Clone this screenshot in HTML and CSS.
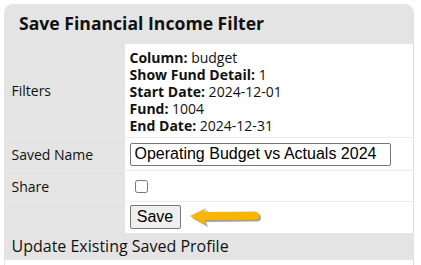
FILE: index.html
```html
<!DOCTYPE html>
<html lang="en">
<head>
    <meta charset="UTF-8">
    <title>Save Financial Income Filter</title>
    <link rel="stylesheet" href="styles.css">
</head>
<body>
    <div class="panel">
        <h2 class="panel-title">Save Financial Income Filter</h2>
        <table class="form-table">
            <tr class="row-filters">
                <td class="label">Filters</td>
                <td class="value filters">
                    <div><b>Column:</b> budget</div>
                    <div><b>Show Fund Detail:</b> 1</div>
                    <div><b>Start Date:</b> 2024-12-01</div>
                    <div><b>Fund:</b> 1004</div>
                    <div><b>End Date:</b> 2024-12-31</div>
                </td>
            </tr>
            <tr class="row-name">
                <td class="label">Saved Name</td>
                <td class="value"><input type="text" class="name-input" value="Operating Budget vs Actuals 2024"></td>
            </tr>
            <tr class="row-share">
                <td class="label">Share</td>
                <td class="value"><input type="checkbox" class="share-box"></td>
            </tr>
            <tr class="row-save">
                <td class="label"></td>
                <td class="value">
                    <div class="save-wrap">
                        <button class="save-btn">Save</button>
                        <svg class="arrow" width="74" height="22" viewBox="0 0 74 22">
                            <path d="M3 11 L19 3 L17 7 L68 6.5 Q72 7 72 10.5 Q72 14.5 68 14.5 L17 15 L19 20 Z" fill="#3a3520" opacity="0.45"/>
                            <path d="M1 9 L17 1 L15 5 L66 4.5 Q70 5 70 8.5 Q70 12.5 66 12.5 L15 13 L17 18 Z" fill="#f8b600"/>
                        </svg>
                    </div>
                </td>
            </tr>
            <tr>
                <td class="section" colspan="2">Update Existing Saved Profile</td>
            </tr>
            <tr>
                <td class="tail" colspan="2"></td>
            </tr>
        </table>
    </div>
</body>
</html>
```

FILE: styles.css
```css
body {
    margin: 0;
    padding: 4px 7px 0 4px;
    background: #fff;
    font-family: 'Open Sans', 'DejaVu Sans', sans-serif;
    color: #111;
}
.panel {
    background: #e4e4e4;
    border-radius: 9px 9px 0 0;
}
.panel-title {
    margin: 0;
    padding: 8px 15px 10px;
    font-size: 17.6px;
    font-weight: bold;
    line-height: 22px;
}
.form-table {
    width: 100%;
    border-collapse: collapse;
    font-size: 14px;
}
.form-table td {
    padding: 0;
    box-sizing: border-box;
    border-bottom: 1px solid #ebebeb;
}
.form-table .label {
    width: 120px;
    padding-left: 7px;
    background: #e4e4e4;
}
.form-table .value {
    background: #fff;
    border-right: 1px solid #ddd;
    padding: 0 5px;
}
.form-table .filters {
    padding: 5px 5px 3px;
    line-height: 17px;
}
.row-filters td { height: 93px; }
.row-name td { height: 33px; }
.row-share td { height: 31px; }
.row-save td { height: 31px; border-bottom: none; }
.name-input {
    box-sizing: border-box;
    width: 261px;
    height: 23px;
    margin: 0;
    padding: 1px 4px;
    border: 1px solid #767676;
    border-radius: 2px;
    font-family: 'Liberation Sans', Arial, sans-serif;
    font-size: 16px;
    color: #000;
    display: block;
}
.share-box {
    margin: 0 0 0 5px;
    width: 13px;
    height: 13px;
    display: block;
}
.save-wrap {
    display: flex;
    align-items: center;
    gap: 8px;
}
.save-btn {
    box-sizing: border-box;
    width: 51px;
    height: 24px;
    padding: 0;
    font-family: 'Liberation Sans', Arial, sans-serif;
    font-size: 16px;
    color: #000;
    background: #efefef;
    border: 1px solid #767676;
    border-radius: 2px;
}
.arrow {
    display: block;
    margin-top: 2px;
}
.form-table .section {
    height: 27px;
    padding-left: 7px;
    background: #e4e4e4;
    font-size: 16px;
    border-bottom: none;
}
.form-table .tail {
    height: 6px;
    background: #fff;
    border-left: 1px solid #e4e4e4;
    border-right: 1px solid #ddd;
}
```
